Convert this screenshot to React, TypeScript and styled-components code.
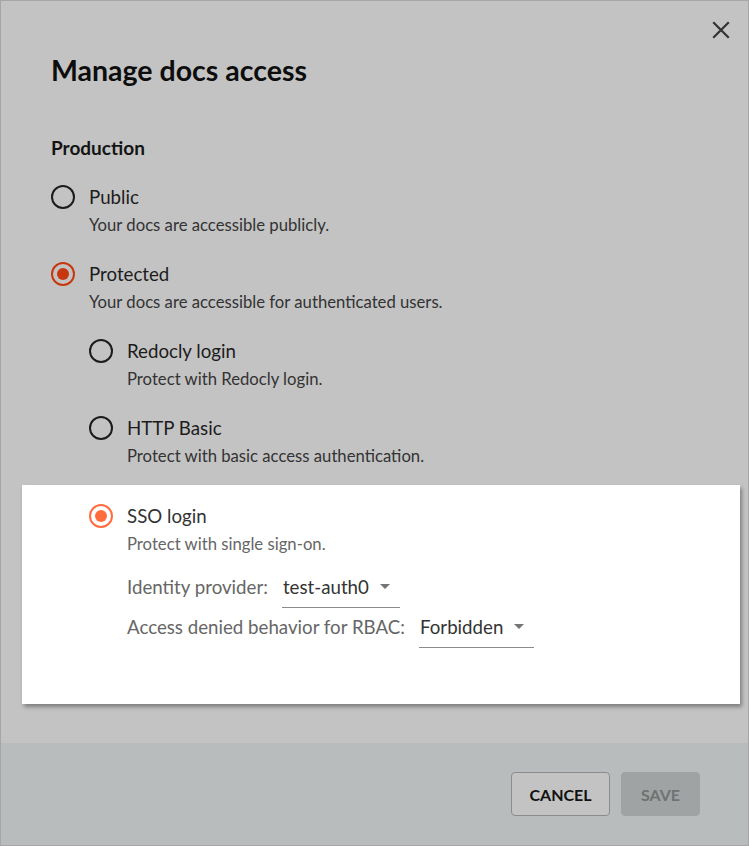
import styled, { createGlobalStyle } from 'styled-components';

const GlobalStyle = createGlobalStyle`
  html, body {
    margin: 0;
    padding: 0;
    background: #c3c3c3;
  }
  body {
    font-family: Lato, "Liberation Sans", sans-serif;
  }
`;

const Dialog = styled.div`
  width: 749px;
  height: 846px;
  box-sizing: border-box;
  border: 1px solid #a6a6a6;
  background: #c3c3c3;
  position: relative;
  display: flex;
  flex-direction: column;
`;

const CloseButton = styled.button`
  position: absolute;
  top: 19px;
  right: 17px;
  width: 20px;
  height: 20px;
  padding: 0;
  border: 0;
  background: transparent;
  display: flex;
  align-items: center;
  justify-content: center;
`;

const Body = styled.div`
  flex: 1;
  padding: 51px 50px 0;
`;

const Title = styled.h1`
  margin: 0;
  font-size: 28.5px;
  font-weight: 700;
  color: #0d0d0d;
  line-height: 36px;
`;

const SectionTitle = styled.h2`
  margin: 48px 0 24px;
  font-size: 19px;
  font-weight: 700;
  color: #141414;
  line-height: 24px;
`;

const Option = styled.div<{ $nested?: boolean; $last?: boolean }>`
  display: grid;
  grid-template-columns: 24px 1fr;
  column-gap: 14px;
  margin-left: ${(p) => (p.$nested ? '38px' : '0')};
  margin-bottom: ${(p) => (p.$last ? '0' : '25px')};
`;

const Radio = styled.span<{ $checked?: boolean; $color: string; $ring: string }>`
  width: 24px;
  height: 24px;
  box-sizing: border-box;
  border-radius: 50%;
  border: 2px solid ${(p) => (p.$checked ? p.$color : p.$ring)};
  display: flex;
  align-items: center;
  justify-content: center;
  margin-top: 1px;

  &::after {
    content: '';
    display: ${(p) => (p.$checked ? 'block' : 'none')};
    width: 12px;
    height: 12px;
    border-radius: 50%;
    background: ${(p) => p.$color};
  }
`;

const OptionText = styled.div`
  display: flex;
  flex-direction: column;
`;

const Label = styled.span<{ $light?: boolean }>`
  font-size: 18.7px;
  line-height: 26px;
  color: ${(p) => (p.$light ? '#333333' : '#1c1c1c')};
`;

const Description = styled.span<{ $light?: boolean }>`
  font-size: 16.7px;
  line-height: 22px;
  margin-top: 4px;
  color: ${(p) => (p.$light ? '#666666' : '#333333')};
`;

const Highlight = styled.div`
  margin: -7px -42px 0 -29px;
  padding: 18px 0 56px 29px;
  background: #ffffff;
  box-shadow: 2px 3px 4px rgba(0, 0, 0, 0.35);
`;

const Fields = styled.div`
  display: flex;
  flex-direction: column;
  gap: 2px;
  margin-top: 15px;
`;

const FieldRow = styled.div`
  display: flex;
  align-items: flex-start;
  height: 38px;
`;

const FieldLabel = styled.span`
  font-size: 18.7px;
  color: #666666;
  margin-right: 14px;
  padding-bottom: 4px;
  box-sizing: border-box;
  height: 38px;
  display: flex;
  align-items: center;
`;

const Select = styled.div`
  display: flex;
  align-items: center;
  height: 38px;
  box-sizing: border-box;
  padding: 0 10px 4px 1px;
  border-bottom: 1px solid #8a8a8a;
  font-size: 18.7px;
  color: #333333;
`;

const Caret = styled.span`
  width: 0;
  height: 0;
  border-left: 5px solid transparent;
  border-right: 5px solid transparent;
  border-top: 5px solid #757575;
  margin-left: 11px;
`;

const Footer = styled.div`
  height: 102px;
  box-sizing: border-box;
  background: #b9bcbc;
  display: flex;
  justify-content: flex-end;
  align-items: flex-start;
  gap: 11px;
  padding: 29px 48px 0 0;
`;

const Button = styled.button<{ $disabled?: boolean; $width: number }>`
  width: ${(p) => p.$width}px;
  height: 44px;
  box-sizing: border-box;
  padding: 0;
  border-radius: 4px;
  font-family: Lato, "Liberation Sans", sans-serif;
  font-size: 16px;
  font-weight: 700;
  text-transform: uppercase;
  border: 1px solid ${(p) => (p.$disabled ? '#a0a3a3' : '#8c8c8c')};
  background: ${(p) => (p.$disabled ? '#a0a3a3' : '#c3c3c3')};
  color: ${(p) => (p.$disabled ? '#6f7272' : '#111111')};
`;

const options = [
  { label: 'Public', desc: 'Your docs are accessible publicly.' },
  { label: 'Protected', desc: 'Your docs are accessible for authenticated users.', checked: true },
];

const nested = [
  { label: 'Redocly login', desc: 'Protect with Redocly login.' },
  { label: 'HTTP Basic', desc: 'Protect with basic access authentication.' },
];

export default function App() {
  return (
    <>
      <GlobalStyle />
      <Dialog>
        <CloseButton aria-label="Close">
          <svg width="18" height="18" viewBox="0 0 18 18">
            <path d="M2 2 L16 16 M16 2 L2 16" stroke="#333" strokeWidth="2.2" strokeLinecap="square" />
          </svg>
        </CloseButton>
        <Body>
          <Title>Manage docs access</Title>
          <SectionTitle>Production</SectionTitle>
          {options.map((o) => (
            <Option key={o.label}>
              <Radio $checked={o.checked} $color="#c8380f" $ring="#1c1c1c" />
              <OptionText>
                <Label>{o.label}</Label>
                <Description>{o.desc}</Description>
              </OptionText>
            </Option>
          ))}
          {nested.map((o) => (
            <Option key={o.label} $nested>
              <Radio $color="#c8380f" $ring="#1c1c1c" />
              <OptionText>
                <Label>{o.label}</Label>
                <Description>{o.desc}</Description>
              </OptionText>
            </Option>
          ))}
          <Highlight>
            <Option $nested $last>
              <Radio $checked $color="#ff6c3d" $ring="#333" />
              <OptionText>
                <Label $light>SSO login</Label>
                <Description $light>Protect with single sign-on.</Description>
                <Fields>
                  <FieldRow>
                    <FieldLabel>Identity provider:</FieldLabel>
                    <Select>
                      test-auth0
                      <Caret />
                    </Select>
                  </FieldRow>
                  <FieldRow>
                    <FieldLabel>Access denied behavior for RBAC:</FieldLabel>
                    <Select>
                      Forbidden
                      <Caret />
                    </Select>
                  </FieldRow>
                </Fields>
              </OptionText>
            </Option>
          </Highlight>
        </Body>
        <Footer>
          <Button $width={99}>Cancel</Button>
          <Button $width={79} $disabled>Save</Button>
        </Footer>
      </Dialog>
    </>
  );
}
